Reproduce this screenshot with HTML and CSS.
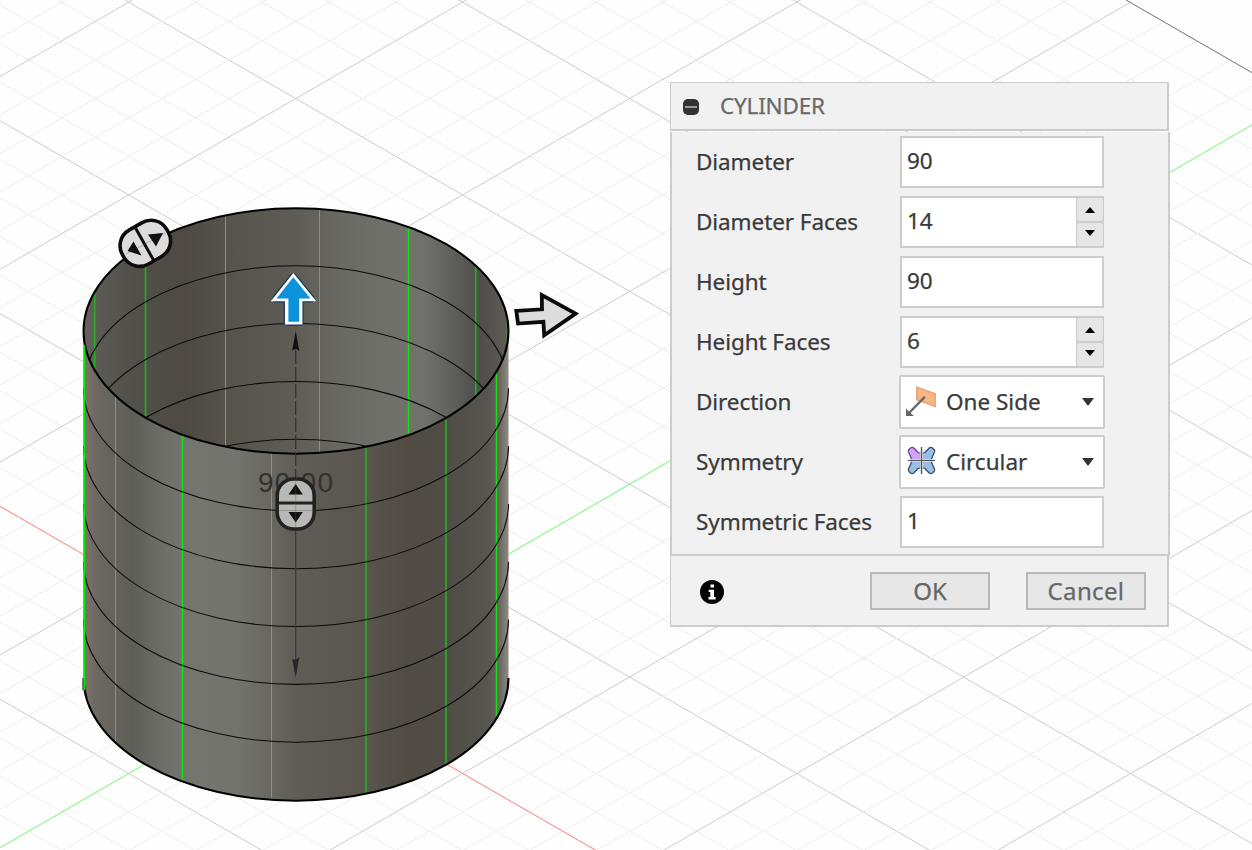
FILE: index.html
```html
<!DOCTYPE html>
<html lang="en">
<head>
<meta charset="utf-8">
<title>Cylinder</title>
<link rel="stylesheet" href="styles.css">
</head>
<body>
<main class="viewport">
  <svg class="scene" width="1252" height="850" viewBox="0 0 1252 850">
    <defs>
      <g id="fall">
        <path class="minor" d="M0 38.57l1252 722.9M0 77.14l1252 722.9M0 115.7l1252 722.9M0 154.3l1252 722.9"/>
        <path class="major" d="M0 0l1252 722.9"/>
      </g>
      <g id="rise">
        <path class="minor" d="M0 38.57l1252-722.9M0 77.14l1252-722.9M0 115.7l1252-722.9M0 154.3l1252-722.9"/>
        <path class="major" d="M0 0l1252-722.9"/>
      </g>
      <clipPath id="plane"><path d="M0-650.7L1252 72.2V850H0Z"/></clipPath>
      <clipPath id="mouth"><ellipse cx="296" cy="331" rx="212.5" ry="122.7"/></clipPath>
      <linearGradient id="outer" gradientUnits="userSpaceOnUse" x1="83" y1="0" x2="509" y2="0">
        <stop offset="0" stop-color="#7c766c"/><stop offset=".03" stop-color="#6d6861"/>
        <stop offset=".075" stop-color="#64635c"/><stop offset=".115" stop-color="#5e5e58"/>
        <stop offset=".17" stop-color="#6a6b64"/><stop offset=".24" stop-color="#74756e"/>
        <stop offset=".36" stop-color="#73746d"/><stop offset=".44" stop-color="#686861"/>
        <stop offset=".5" stop-color="#5e5d56"/><stop offset=".66" stop-color="#5a564e"/>
        <stop offset=".76" stop-color="#504b43"/><stop offset=".86" stop-color="#514d46"/>
        <stop offset=".95" stop-color="#565550"/><stop offset=".975" stop-color="#66635c"/>
        <stop offset="1" stop-color="#918c83"/>
      </linearGradient>
      <linearGradient id="inner" gradientUnits="userSpaceOnUse" x1="83" y1="0" x2="509" y2="0">
        <stop offset="0" stop-color="#65635e"/><stop offset=".05" stop-color="#595752"/>
        <stop offset=".14" stop-color="#514e48"/><stop offset=".24" stop-color="#4e4a43"/>
        <stop offset=".34" stop-color="#56534b"/><stop offset=".5" stop-color="#5e5c55"/>
        <stop offset=".6" stop-color="#686962"/><stop offset=".7" stop-color="#6f706a"/>
        <stop offset=".8" stop-color="#71726c"/><stop offset=".87" stop-color="#5e5e5a"/>
        <stop offset=".93" stop-color="#4e4d49"/><stop offset="1" stop-color="#615c56"/>
      </linearGradient>
    </defs>

    <g clip-path="url(#plane)">
      <use href="#fall" y="-650.7"/><use href="#fall" y="-457.9"/><use href="#fall" y="-265"/><use href="#fall" y="-72.2"/>
      <use href="#fall" y="120.7"/><use href="#fall" y="313.5"/><use href="#fall" y="506.3"/><use href="#fall" y="699.2"/>
      <use href="#rise" y="-116.4"/><use href="#rise" y="76.5"/><use href="#rise" y="269.3"/><use href="#rise" y="462.1"/>
      <use href="#rise" y="655"/><use href="#rise" y="847.8"/><use href="#rise" y="1040.6"/><use href="#rise" y="1233.5"/><use href="#rise" y="1426.3"/>
    </g>
    <path class="edge" d="M1126 0L1252 72.7"/>
    <path class="axis-x" d="M0 506.3l1252 722.9"/>
    <path class="axis-y" d="M0 847.8l1252-722.9"/>

    <path fill="url(#outer)" d="M83.5 331V678A212.5 122.7 0 0 0 508.500 678V331Z"/>
    <ellipse cx="296" cy="331" rx="212.5" ry="122.7" fill="url(#inner)"/>
    <g class="seam">
      <path d="M225.5 215.5V447M319.5 209V453"/>
      <path class="wide" d="M408.5 227V435"/>
      <path class="dim" d="M94.7 291V371M145.5 244V418M475.7 265V397M507.5 320V343"/>
      <path d="M115.5 396V743M271.5 453V800"/>
      <path class="wide" d="M182.5 435V782M496.5 372V719"/>
      <path class="dim" d="M366 447V794M446 418V765"/>
    </g>
    <g class="ring" clip-path="url(#mouth)">
      <ellipse cx="296" cy="388.5" rx="212.5" ry="122.7"/><ellipse cx="296" cy="446.3" rx="212.5" ry="122.7"/>
      <ellipse cx="296" cy="504.2" rx="212.5" ry="122.7"/><ellipse cx="296" cy="562" rx="212.5" ry="122.7"/>
    </g>
    <path class="ring" d="M83.5 388.300a212.5 122.7 0 0 0 425 0M83.5 446.100a212.5 122.7 0 0 0 425 0M83.5 503.900a212.5 122.7 0 0 0 425 0M83.5 561.700a212.5 122.7 0 0 0 425 0M83.5 619.500a212.5 122.7 0 0 0 425 0"/>
    <path class="rim" d="M83.5 690V678A212.5 122.7 0 0 0 508.5 678"/>
    <ellipse class="rim" cx="296" cy="331" rx="212.5" ry="122.7"/>
    <path class="side" d="M84.2 345V690"/>

    <path class="dimline upper" d="M295.7 350V480"/>
    <path class="dimline" d="M295.7 528V660"/>
    <path class="tip" d="M295.7 331L299.3 351Q295.7 347 292.2 351Z"/>
    <path class="tip low" d="M295.7 677.5L299.3 657Q295.7 661 292.2 659Z"/>
    <text class="measure" x="258" y="492" textLength="75">90.00</text>
    <g class="knob soft" transform="translate(295.7 504)">
      <rect x="-18.500" y="-25" width="37" height="50" rx="16.500"/>
      <path class="bar" d="M-18-.9H18"/>
      <path class="mark" d="M0-20L7.2-9.5H-7.2ZM0 18.5L7.2 8H-7.2Z"/>
    </g>
    <path class="ghost" d="M295.7 480V527M278 510.5H313"/>

    <g class="knob">
      <rect x="-19.5" y="-25.5" width="39" height="51" rx="18" transform="translate(145.3 243.3) rotate(60)"/>
      <path class="bar" d="M135.5 228L153.5 260"/>
      <path class="ghost" d="M126 254L166 233"/>
      <path class="mark" d="M133.5 241.500L141.500 255.500L127.500 251ZM148 234.500L163 233L156 246.500Z"/>
    </g>

    <path class="blue-rim" d="M293.3 277.3L310.500 298.500H299.700V321.7H287.7V298.500H276.500Z"/>
    <path class="blue" d="M293.3 277.3L310.500 298.500H299.700V321.7H287.7V298.500H276.500Z"/>
    <path class="fill-blue" d="M293.3 277.300L310.500 298.500H299.200V321.700H288.400V298.500H276.500Z"/>
    <path class="gray-arrow" d="M516.3 310.8L542 309.3L541.8 295L575.6 313.600L544.2 335.200L543.4 321.800L518 323.600Z"/>
  </svg>

  <section class="dialog">
    <header class="head">
      <svg class="collapse" width="16" height="16" viewBox="0 0 16 16"><rect width="16" height="16" rx="5" fill="#333"/><path d="M2 8H14" stroke="#999" stroke-width="2"/></svg>
      <h1 class="title">CYLINDER</h1>
    </header>
    <div class="body">
      <div class="row"><span class="label">Diameter</span><div class="field">90</div></div>
      <div class="row"><span class="label">Diameter Faces</span>
        <div class="field">14<div class="spin"><i><svg width="10" height="6"><path d="M5 0L10 6H0Z"/></svg></i><i><svg width="10" height="6"><path d="M5 6L10 0H0Z"/></svg></i></div></div></div>
      <div class="row"><span class="label">Height</span><div class="field">90</div></div>
      <div class="row"><span class="label">Height Faces</span>
        <div class="field">6<div class="spin"><i><svg width="10" height="6"><path d="M5 0L10 6H0Z"/></svg></i><i><svg width="10" height="6"><path d="M5 6L10 0H0Z"/></svg></i></div></div></div>
      <div class="row"><span class="label">Direction</span>
        <div class="select">
          <svg class="glyph" width="32" height="32" viewBox="0 0 32 32">
            <path d="M11 1L31 8.3V22.7L11 15.2Z" fill="#e8a97c"/><path d="M12.8 3.5L29.3 9.5V20.2L12.8 14Z" fill="#f8b586"/>
            <path d="M19.8 11.8L4 28" stroke="#666" stroke-width="2.4"/><path d="M1 23.5L8.8 31H1Z" fill="#666"/>
          </svg>
          <span class="value">One Side</span>
          <svg class="caret" width="12" height="8"><path d="M0 0H12L6 8Z"/></svg>
        </div></div>
      <div class="row"><span class="label">Symmetry</span>
        <div class="select">
          <svg class="glyph" width="32" height="32" viewBox="0 0 32 32">
            <g stroke-width="1.3" stroke-linejoin="round">
              <path id="wing" d="M16.5 15.500V8.500L13 7.500L8.800 3Q7.300 1.700 5.500 3L4 4.400Q3 5.500 3.500 7L5.500 11.500L7 15.500Z" fill="#cfa3f5" stroke="#6b4391"/>
              <path d="M16.500 15.500V8.500L20 7.500L24.200 3Q25.700 1.700 27.500 3L29 4.400Q30 5.500 29.500 7L27.500 11.500L26 15.500Z" fill="#9bbfe3" stroke="#354d70"/>
              <path d="M16.500 15.500V22.500L13 23.500L8.800 28Q7.300 29.300 5.500 28L4 26.600Q3 25.500 3.500 24L5.500 19.500L7 15.500Z" fill="#9bbfe3" stroke="#354d70"/>
              <path d="M16.500 15.500V22.500L20 23.500L24.200 28Q25.700 29.300 27.500 28L29 26.600Q30 25.500 29.500 24L27.500 19.500L26 15.500Z" fill="#9bbfe3" stroke="#354d70"/>
            </g>
            <path d="M16.500 2V29M3 15.500H30" stroke="#e4e8ee" stroke-width="2.600"/>
            <path d="M16.500 2V29M3 15.500H30" stroke="#555" stroke-width="1.200"/>
          </svg>
          <span class="value">Circular</span>
          <svg class="caret" width="12" height="8"><path d="M0 0H12L6 8Z"/></svg>
        </div></div>
      <div class="row"><span class="label">Symmetric Faces</span><div class="field">1</div></div>
    </div>
    <footer class="foot">
      <svg class="info" width="24" height="24" viewBox="0 0 24 24"><circle cx="12" cy="12" r="12"/><path d="M10.500 4.500H14V7.500H10.500ZM8.700 9.700H14V17H15.600V19.500H8.500V17H10.300V12H8.700Z" fill="#fff"/></svg>
      <button class="btn">OK</button>
      <button class="btn cancel">Cancel</button>
    </footer>
  </section>
</main>
</body>
</html>
```
FILE: styles.css
```css
* { box-sizing: border-box; }
body { margin: 0; overflow: hidden; background: #fefefe; font-family: "Noto Sans", "Open Sans", sans-serif; }
.viewport { position: relative; width: 1252px; height: 850px; overflow: hidden; }
.scene { display: block; }
.minor, .major, .edge, .axis-x, .axis-y, .seam path, .side, .dimline, .ghost { fill: none; }
.minor { stroke: #eee; stroke-width: 1; }
.major { stroke: #ccc; stroke-width: 1; }
.edge { stroke: #777; }
.axis-x { stroke: #ff9c9c; stroke-width: 1.1; }
.axis-y { stroke: #90ff90; stroke-width: 1.1; }
.seam { stroke: #14e014; stroke-width: 1.1; }
.seam path { shape-rendering: crispEdges; }
.seam .wide { stroke-width: 1.5; shape-rendering: auto; }
.seam .dim { stroke: #1fb01f; stroke-width: 1.7; shape-rendering: auto; }
.side { stroke: #00f000; stroke-width: 1.8; }
.ring { fill: none; stroke: #0c0c0b; stroke-width: 1.05; }
.rim { fill: none; stroke: #000; stroke-width: 2; }
.dimline { stroke: #3b3a37; stroke-width: 1.2; }
.dimline.upper { stroke: #33322f; stroke-dasharray: 14 3; }
.tip { fill: #0f0f0e; }
.tip.low { fill: #262624; }
.measure { font: 28px "Liberation Sans", Arial, sans-serif; fill: #31312e; }
.knob { fill: #dcdcdc; stroke: #0c0c0c; stroke-width: 3.6; }
.knob.soft { fill: #b8b8b6; stroke: #222220; }
.knob .bar { stroke-width: 3; }
.knob .mark { fill: #111; stroke: none; }
.ghost, .knob .ghost { stroke: #555; stroke-width: 1; opacity: .35; }
.blue-rim { stroke: #17365d; stroke-width: 8; stroke-linejoin: round; }
.blue { stroke: #fff; stroke-width: 5.5; }
.fill-blue { fill: #0a93d9; }
.gray-arrow { fill: #dcdcdc; stroke: #0b0b0b; stroke-width: 3.8; }

.dialog { position: absolute; left: 670px; top: 82px; width: 500px; color: #3a3a3a; -webkit-text-stroke: .25px; }
.head { display: flex; align-items: center; width: 499px; height: 49px; padding: 0 0 0 12px; border: solid #ccc; border-width: 1px 2px 2px 1px; background: #f1f1f1; }
.collapse { margin-top: 2px; }
.title { margin: 0 0 0 21px; font-size: 22.5px; font-weight: 400; line-height: 30px; color: #696969; letter-spacing: -.2px; }
.body { height: 424px; margin-top: 1px; padding: 0 0 0 24px; border: solid #ccc; border-width: 0 2px 2px; background: #f1f1f1; }
.row { display: flex; align-items: center; height: 60px; }
.label { width: 204px; padding-bottom: 2px; font-size: 22.5px; letter-spacing: -.08px; white-space: nowrap; }
.field { position: relative; width: 204px; height: 52px; padding: 0 5px; border: 2px solid #ccc; background: #fff; font-size: 22.5px; line-height: 46px; }
.spin { position: absolute; right: -2px; top: -2px; display: flex; flex-direction: column; gap: 2px; width: 28px; height: 52px; padding: 2px 1px; background: #ccc; }
.spin i { flex: 1; display: flex; align-items: center; justify-content: center; border-radius: 2px; background: #e6e6e6; }
.spin i:first-child { padding-top: 2px; }
.spin i:last-child { padding-bottom: 3px; }
.select { display: flex; align-items: center; width: 206px; height: 54px; margin-left: -1px; padding: 0 9px 0 4px; border: 2px solid #ccc; border-radius: 2px; background: #fff; font-size: 22.5px; }
.glyph { margin-bottom: 2px; }
.value { flex: 1; margin-left: 9px; padding-bottom: 2px; }
.caret { fill: #333; }
.foot { display: flex; align-items: center; width: 499px; height: 71px; padding: 0 21px 0 29px; border: solid #ccc; border-width: 0 2px 2px 1px; background: #f1f1f1; }
.info { margin-top: 3px; }
.btn { width: 120px; height: 38px; margin: 1px 0 0 36px; padding: 0; border: 2px solid #b8b8b8; border-radius: 1px; background: #e7e7e7; color: #666; font: 24px "Noto Sans", sans-serif; line-height: 32px; }
.cancel { letter-spacing: .35px; }
.info + .btn { margin-left: auto; }
```
